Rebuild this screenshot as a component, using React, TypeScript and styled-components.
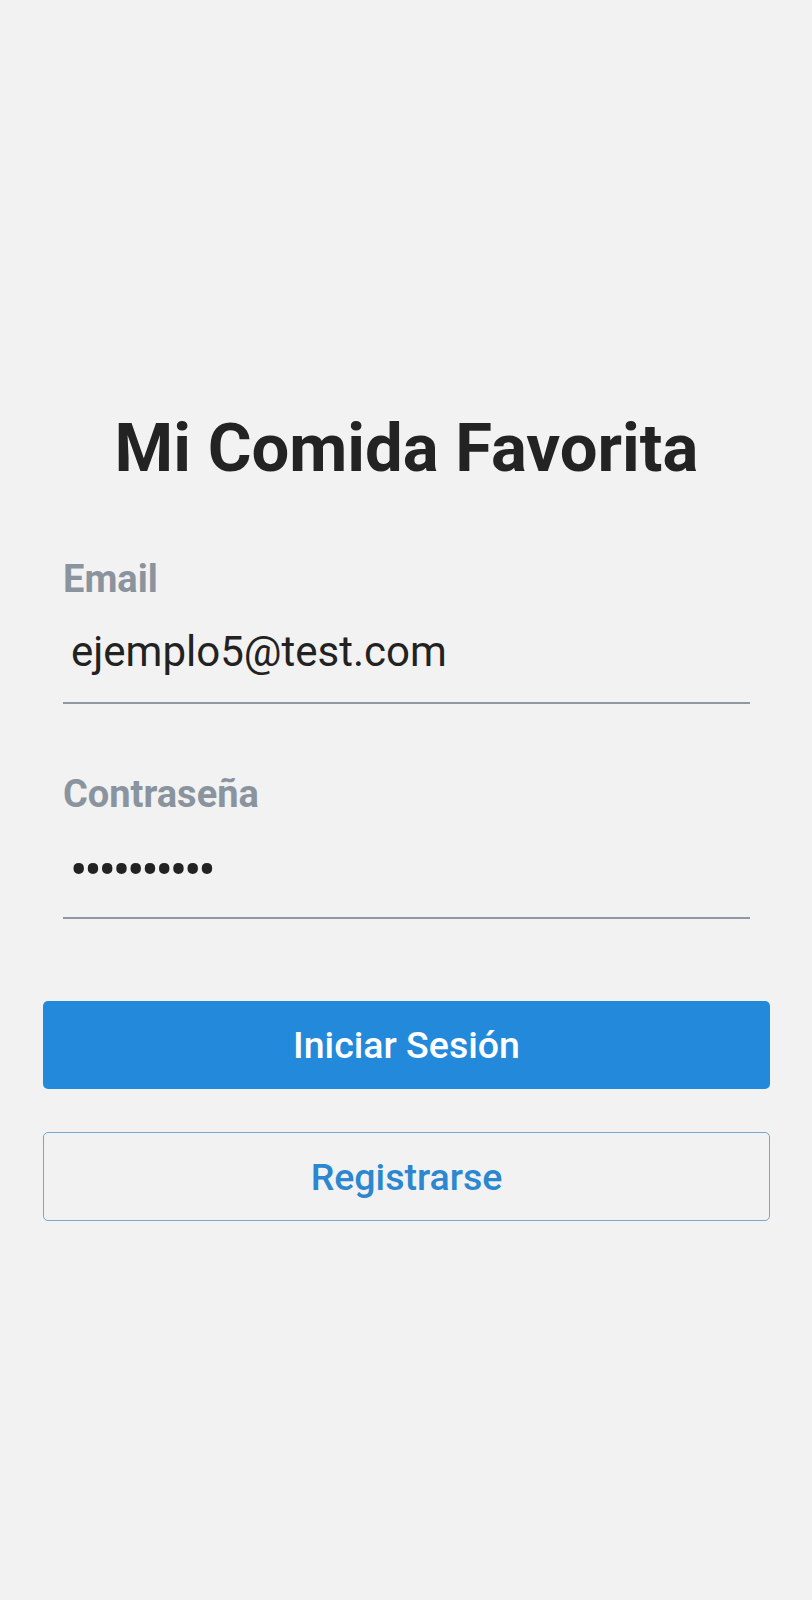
import React from "react";
import styled, { createGlobalStyle } from "styled-components";

const Global = createGlobalStyle`
  html, body { margin: 0; padding: 0; background: #f2f2f2; }
  body { font-family: Roboto, "Noto Sans", sans-serif; }
`;

const Screen = styled.div`
  min-height: 1600px;
  box-sizing: border-box;
  padding: 400px 42px 0 43px;
  display: flex;
  flex-direction: column;
`;

const Title = styled.h1`
  margin: 0;
  text-align: center;
  font-size: 67px;
  font-weight: 700;
  color: #232323;
  line-height: 96px;
`;

const Form = styled.div`
  display: flex;
  flex-direction: column;
  padding: 0 20px;
  margin-top: 61px;
  gap: 68px;
`;

const Field = styled.div`
  display: flex;
  flex-direction: column;
`;

const Label = styled.label`
  font-size: 38px;
  font-weight: 700;
  color: #8a949e;
  line-height: 44px;
`;

const Value = styled.div<{ $dots?: boolean }>`
  box-sizing: border-box;
  padding: ${(p) => (p.$dots ? "8px 8px 0 7px" : "0 8px")};
  height: 103px;
  display: flex;
  align-items: center;
  font-size: ${(p) => (p.$dots ? "52px" : "42px")};
  letter-spacing: ${(p) => (p.$dots ? "-3.3px" : "0")};
  color: #222;
  border-bottom: 2px solid #8e99a4;
`;

const Buttons = styled.div`
  display: flex;
  flex-direction: column;
  gap: 43px;
  margin-top: 82px;
`;

const Button = styled.button<{ $primary?: boolean }>`
  height: ${(p) => (p.$primary ? "88px" : "89px")};
  border-radius: 5px;
  font-family: Roboto, sans-serif;
  font-size: 37.5px;
  font-weight: 500;
  cursor: pointer;
  background: ${(p) => (p.$primary ? "#2389db" : "transparent")};
  color: ${(p) => (p.$primary ? "#ffffff" : "#2a87d0")};
  border: ${(p) => (p.$primary ? "none" : "1px solid #74a6cf")};
`;

export default function App() {
  return (
    <>
      <Global />
      <Screen>
        <Title>Mi Comida Favorita</Title>
        <Form>
          <Field>
            <Label>Email</Label>
            <Value>ejemplo5@test.com</Value>
          </Field>
          <Field>
            <Label>Contraseña</Label>
            <Value $dots>••••••••••</Value>
          </Field>
        </Form>
        <Buttons>
          <Button $primary>Iniciar Sesión</Button>
          <Button>Registrarse</Button>
        </Buttons>
      </Screen>
    </>
  );
}
